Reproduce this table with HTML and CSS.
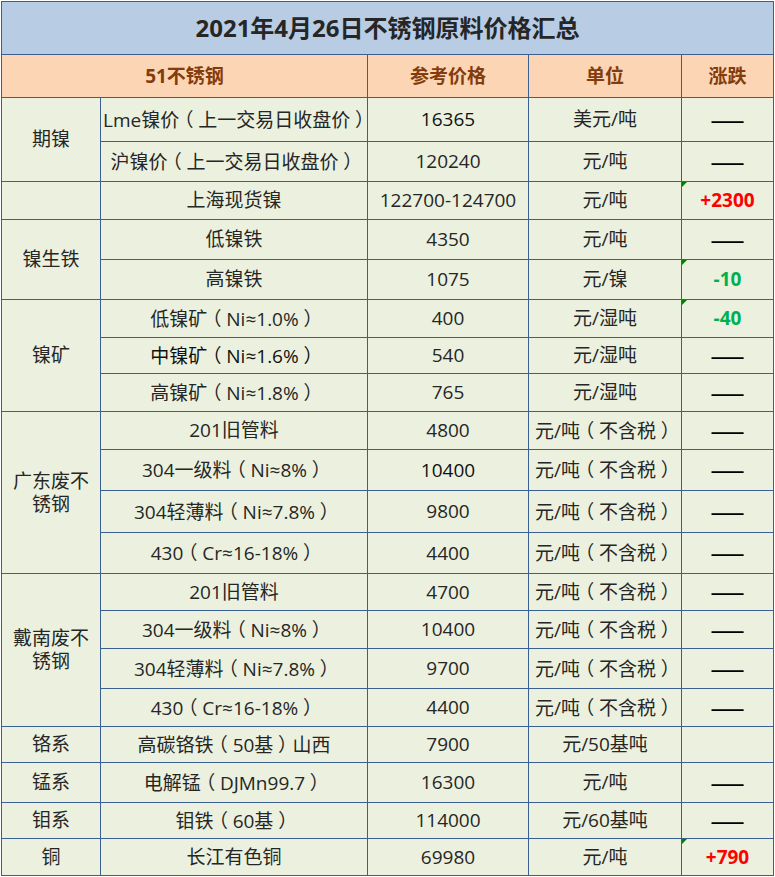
FILE: index.html
```html
<!DOCTYPE html>
<html lang="zh-CN">
<head>
<meta charset="utf-8">
<title>2021年4月26日不锈钢原料价格汇总</title>
<link rel="stylesheet" href="styles.css">
</head>
<body>
<table class="sheet">
  <colgroup>
    <col class="c1"><col class="c2"><col class="c3"><col class="c4"><col class="c5">
  </colgroup>
  <tr class="h53"><td class="title" colspan="5">2021年4月26日不锈钢原料价格汇总</td></tr>
  <tr class="h43 head"><td colspan="2">51不锈钢</td><td>参考价格</td><td>单位</td><td>涨跌</td></tr>
  <tr class="h44"><td rowspan="2">期镍</td><td>Lme镍价<span class="pb">（</span>上一交易日收盘价<span class="pb">）</span></td><td class="dark">16365</td><td>美元/吨</td><td class="dash">——</td></tr>
  <tr class="h40"><td>沪镍价<span class="pb">（</span>上一交易日收盘价<span class="pb">）</span></td><td>120240</td><td>元/吨</td><td class="dash">——</td></tr>
  <tr class="h38"><td></td><td>上海现货镍</td><td>122700-124700</td><td>元/吨</td><td class="up flag">+2300</td></tr>
  <tr class="h40"><td rowspan="2">镍生铁</td><td>低镍铁</td><td>4350</td><td>元/吨</td><td class="dash">——</td></tr>
  <tr class="h40"><td>高镍铁</td><td>1075</td><td>元/镍</td><td class="down flag">-10</td></tr>
  <tr class="h38"><td rowspan="3">镍矿</td><td>低镍矿<span class="pb">（</span>Ni≈1.0%<span class="pb">）</span></td><td>400</td><td>元/湿吨</td><td class="down flag">-40</td></tr>
  <tr class="h36"><td class="dark">中镍矿<span class="pb">（</span>Ni≈1.6%<span class="pb">）</span></td><td>540</td><td>元/湿吨</td><td class="dash">——</td></tr>
  <tr class="h38"><td>高镍矿<span class="pb">（</span>Ni≈1.8%<span class="pb">）</span></td><td>765</td><td>元/湿吨</td><td class="dash">——</td></tr>
  <tr class="h38"><td rowspan="4" class="wrap">广东废不锈钢</td><td>201旧管料</td><td>4800</td><td>元/吨<span class="pb">（</span>不含税<span class="pb">）</span></td><td class="dash">——</td></tr>
  <tr class="h41"><td>304一级料<span class="pb">（</span>Ni≈8%<span class="pb">）</span></td><td class="dark">10400</td><td>元/吨<span class="pb">（</span>不含税<span class="pb">）</span></td><td class="dash">——</td></tr>
  <tr class="h42"><td>304轻薄料<span class="pb">（</span>Ni≈7.8%<span class="pb">）</span></td><td>9800</td><td>元/吨<span class="pb">（</span>不含税<span class="pb">）</span></td><td class="dash">——</td></tr>
  <tr class="h41"><td>430<span class="pb">（</span>Cr≈16-18%<span class="pb">）</span></td><td>4400</td><td>元/吨<span class="pb">（</span>不含税<span class="pb">）</span></td><td class="dash">——</td></tr>
  <tr class="h37"><td rowspan="4" class="wrap">戴南废不锈钢</td><td>201旧管料</td><td>4700</td><td>元/吨<span class="pb">（</span>不含税<span class="pb">）</span></td><td class="dash">——</td></tr>
  <tr class="h38"><td>304一级料<span class="pb">（</span>Ni≈8%<span class="pb">）</span></td><td>10400</td><td>元/吨<span class="pb">（</span>不含税<span class="pb">）</span></td><td class="dash">——</td></tr>
  <tr class="h40"><td>304轻薄料<span class="pb">（</span>Ni≈7.8%<span class="pb">）</span></td><td>9700</td><td>元/吨<span class="pb">（</span>不含税<span class="pb">）</span></td><td class="dash">——</td></tr>
  <tr class="h38"><td>430<span class="pb">（</span>Cr≈16-18%<span class="pb">）</span></td><td>4400</td><td>元/吨<span class="pb">（</span>不含税<span class="pb">）</span></td><td class="dash">——</td></tr>
  <tr class="h36"><td>铬系</td><td>高碳铬铁<span class="pb">（</span>50基<span class="pb">）</span>山西</td><td>7900</td><td>元/50基吨</td><td></td></tr>
  <tr class="h40"><td>锰系</td><td>电解锰<span class="pb">（</span>DJMn99.7<span class="pb">）</span></td><td>16300</td><td>元/吨</td><td class="dash">——</td></tr>
  <tr class="h36"><td>钼系</td><td>钼铁<span class="pb">（</span>60基<span class="pb">）</span></td><td>114000</td><td>元/60基吨</td><td class="dash">——</td></tr>
  <tr class="h37"><td>铜</td><td>长江有色铜</td><td>69980</td><td>元/吨</td><td class="up flag">+790</td></tr>
</table>
</body>
</html>
```

FILE: styles.css
```css
html, body {
  margin: 0;
  padding: 0;
  background: #ffffff;
}

body {
  padding: 1px 0 0 1px;
  font-family: "Open Sans", "Noto Sans CJK SC", sans-serif;
  color: #262626;
}

.sheet {
  border-collapse: collapse;
  table-layout: fixed;
  width: 772px;
  font-size: 19px;
  background: #ebf1de;
}

.c1 { width: 99px; }
.c2 { width: 267px; }
.c3 { width: 161px; }
.c4 { width: 153px; }
.c5 { width: 92px; }

.sheet td {
  border: 1px solid #3a5f92;
  padding: 0 2px;
  text-align: center;
  vertical-align: middle;
  white-space: nowrap;
  line-height: 1.2;
  position: relative;
}

.sheet td.wrap {
  white-space: normal;
  padding: 0 8px;
}

/* fullwidth brackets: half-width glyph padded back to a full em, ink centred */
.pb {
  font-family: "Noto Sans CJK SC", sans-serif;
  font-feature-settings: "halt" 1;
  padding: 0 0.25em;
}

.h53 { height: 53px; }
.h44 { height: 44px; }
.h43 { height: 43px; }
.h42 { height: 42px; }
.h41 { height: 41px; }
.h40 { height: 40px; }
.h38 { height: 38px; }
.h37 { height: 37px; }
.h36 { height: 36px; }

.sheet td.title {
  background: #b8cce4;
  font-size: 24px;
  font-weight: 700;
  color: #262626;
}

.head td {
  background: #fcd5b4;
  font-weight: 700;
  color: #843c0c;
}

.dark { color: #111111; }

.sheet td.dash {
  color: #000000;
  font-family: "Noto Sans CJK SC", sans-serif;
  font-size: 20px;
  font-weight: 700;
}

.up {
  color: #ff0000;
  font-weight: 700;
}

.down {
  color: #00b050;
  font-weight: 700;
}

.flag::before {
  content: "";
  position: absolute;
  left: 0;
  top: 0;
  width: 0;
  height: 0;
  border-top: 5px solid #008000;
  border-right: 5px solid transparent;
}
```
